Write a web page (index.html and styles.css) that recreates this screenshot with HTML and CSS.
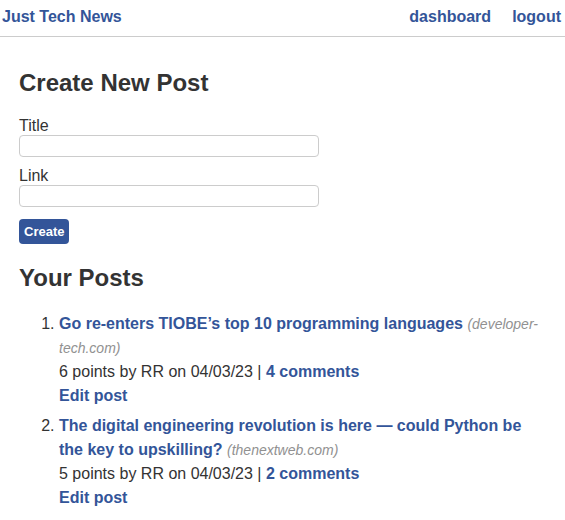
FILE: index.html
```html
<!DOCTYPE html>
<html>
<head>
<meta charset="utf-8">
<link rel="stylesheet" href="styles.css">
</head>
<body>
<header class="site-header">
  <a class="brand" href="#">Just Tech News</a>
  <nav class="nav">
    <a href="#">dashboard</a>
    <a href="#">logout</a>
  </nav>
</header>
<main class="main">
  <h2 class="heading">Create New Post</h2>
  <form class="post-form">
    <label class="field-label" for="title">Title</label>
    <input class="field-input" id="title" type="text">
    <label class="field-label" for="link">Link</label>
    <input class="field-input" id="link" type="text">
    <button class="btn" type="button">Create</button>
  </form>
  <h2 class="heading heading-posts">Your Posts</h2>
  <ol class="post-list">
    <li class="post">
      <div class="post-title"><a href="#">Go re-enters TIOBE’s top 10 programming languages</a> <span class="domain">(developer-tech.com)</span></div>
      <div class="post-meta">6 points by RR on 04/03/23 | <a href="#">4 comments</a></div>
      <div><a href="#">Edit post</a></div>
    </li>
    <li class="post">
      <div class="post-title"><a href="#">The digital engineering revolution is here — could Python be the key to upskilling?</a> <span class="domain">(thenextweb.com)</span></div>
      <div class="post-meta">5 points by RR on 04/03/23 | <a href="#">2 comments</a></div>
      <div><a href="#">Edit post</a></div>
    </li>
  </ol>
</main>
</body>
</html>
```

FILE: styles.css
```css
* { box-sizing: border-box; }
html, body {
  margin: 0;
  padding: 0;
  background: #fff;
}
body {
  font-family: "Liberation Sans", Arial, sans-serif;
  font-size: 16px;
  color: #333;
}
a {
  color: #335599;
  font-weight: bold;
  text-decoration: none;
}
.site-header {
  display: flex;
  justify-content: space-between;
  align-items: center;
  height: 37px;
  padding: 0 4px 2px 2px;
  border-bottom: 1px solid #cccccc;
}
.brand {
  font-size: 16px;
}
.nav {
  display: flex;
  gap: 21px;
}
.main {
  padding: 12px 19px 0 19px;
}
.heading {
  font-size: 24px;
  font-weight: bold;
  margin: 20px 0 20px 0;
  color: #333;
}
.post-form {
  display: flex;
  flex-direction: column;
  align-items: flex-start;
}
.field-label {
  display: block;
  line-height: 18px;
  margin-bottom: 0;
}
.field-input {
  width: 300px;
  height: 22px;
  border: 1px solid #cccccc;
  border-radius: 4px;
  margin: 0 0 10px 0;
  padding: 2px 4px;
  font-family: inherit;
}
.btn {
  margin-top: 2px;
  background: #335599;
  color: #fff;
  font-family: "Liberation Sans", Arial, sans-serif;
  font-size: 13px;
  font-weight: bold;
  border: none;
  border-radius: 4px;
  height: 25px;
  padding: 0 5px;
}
.heading-posts {
  margin-top: 20px;
}
.post-list {
  margin: 19px 0 0 0;
  padding-left: 40px;
  line-height: 24px;
}
.post {
  margin-bottom: 6px;
}
.domain {
  font-style: italic;
  font-size: 14px;
  color: #919191;
}
```
